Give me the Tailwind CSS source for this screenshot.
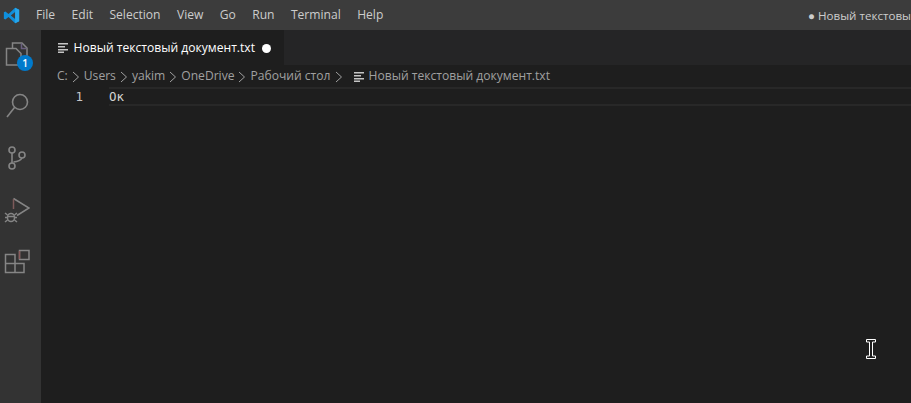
<!DOCTYPE html>
<html lang="en">
<head>
  <meta charset="UTF-8" />
  <title>Новый текстовый документ.txt</title>
  <script src="https://cdn.jsdelivr.net/npm/@tailwindcss/browser@4"></script>
</head>
<body class="w-[911px] h-[403px] overflow-hidden bg-[#1e1e1e] font-['Open_Sans',sans-serif] text-[12.1px] flex flex-col relative">

  <!-- title bar -->
  <div class="h-[30px] shrink-0 bg-[#3c3c3c] flex items-center text-[#cccccc] relative">
    <div class="w-[36px] flex pl-[3px]">
      <svg width="17" height="17" viewBox="0 0 20 20">
        <path d="M14.300 1 19 3.200v13.600L14.300 19 6.500 11.900 2.800 14.800 1 13.900V6.100l1.800-.9 3.700 2.900zM14.300 6 9.200 10l5.100 4z" fill="#0f8fdc" fill-rule="evenodd"/>
        <path d="M14.300 1 19 3.200v13.600L14.300 19z" fill="#28a6ea"/>
      </svg>
    </div>
    <nav class="flex gap-[16.400px]">
      <span>File</span>
      <span>Edit</span>
      <span>Selection</span>
      <span>View</span>
      <span>Go</span>
      <span>Run</span>
      <span>Terminal</span>
      <span>Help</span>
    </nav>
    <span class="absolute left-[808px] top-[7px] whitespace-nowrap text-[11.600px]">● Новый текстовы</span>
  </div>

  <div class="flex flex-1 min-h-0">
    <!-- activity bar -->
    <aside class="w-[41px] shrink-0 bg-[#333333] flex flex-col items-center pr-[7px] text-[#858585]">
      <div class="h-[50px] w-full relative flex items-center justify-center">
        <svg width="26" height="26" viewBox="0 0 26 26" fill="none" stroke="currentColor" stroke-width="1.500">
          <path d="M8.500 6V1h9.500l5 5v13.500h-6"/><path d="M17.500 1.500v5h5" stroke="#6a5f80"/><path d="M2.500 6.500H12l5 5V23H2.500z"/>
        </svg>
        <span class="absolute left-[17px] top-[25px] w-[16px] h-[16px] rounded-full bg-[#007acc] text-white text-[10px] font-semibold leading-[16px] text-center">1</span>
      </div>
      <div class="h-[52px] flex items-center justify-center">
        <svg width="26" height="26" viewBox="0 0 26 26" fill="none" stroke="currentColor" stroke-width="1.600">
          <circle cx="16" cy="9" r="7.500"/><path d="M10.500 14.500 3 24"/>
        </svg>
      </div>
      <div class="h-[52px] flex items-center justify-center">
        <svg width="26" height="26" viewBox="0 0 26 26" fill="none" stroke="currentColor" stroke-width="1.600">
          <circle cx="8" cy="5" r="3"/><circle cx="8" cy="21" r="3"/><circle cx="18" cy="10" r="3"/>
          <path d="M8 8v10M9.500 17c5-.5 7.500-2 8.500-4"/>
        </svg>
      </div>
      <div class="h-[52px] flex items-center justify-center">
        <svg width="26" height="26" viewBox="0 0 26 26" fill="none" stroke="currentColor" stroke-width="1.500">
          <path d="M9.500 1.500 25 11 13 18.500"/><path d="M9.500 2v10" stroke="#7d5a5a"/>
          <rect x="3.500" y="16.500" width="7" height="8" rx="3.500"/><path d="M1 16l2.500 2M13 16l-2.500 2M1 20.500h2.500M10.500 20.500H13M1 25l2.500-2M13 25l-2.500-2M3.500 19.500h7"/>
        </svg>
      </div>
      <div class="h-[52px] flex items-center justify-center">
        <svg width="26" height="26" viewBox="0 0 26 26" fill="none" stroke="currentColor" stroke-width="1.500">
          <path d="M1.500 5.500H11v18H1.500zM1.500 14.500H20v9H11"/><path d="M15.500 1.500H25v9h-9.500z"/><path d="M15.500 2v8" stroke="#8a5a5a"/>
        </svg>
      </div>
    </aside>

    <!-- editor -->
    <main class="flex-1 min-w-0 flex flex-col">
      <div class="h-[35px] shrink-0 bg-[#252526] flex">
        <div class="w-[243px] bg-[#1e1e1e] flex items-center pl-[16.500px] pt-[1px] text-white">
          <svg width="11" height="10" viewBox="0 0 11 10" class="mr-[5px] mt-[-1px]" fill="#c5c5c5">
            <path d="M0 0h10v1.500H0zM0 3h7v1.500H0zM0 6h10v1.500H0zM0 8.500h6V10H0z"/>
          </svg>
          <span class="whitespace-nowrap">Новый текстовый документ.txt</span>
          <span class="ml-[7px] w-[9px] h-[9px] rounded-full bg-white"></span>
        </div>
      </div>
      <div class="h-[22px] shrink-0 flex items-center pl-[16px] pt-[1px] text-[#a0a0a0] whitespace-nowrap">
        <span>C:</span>
        <svg width="12" height="12" viewBox="0 0 12 12" class="mx-[2px]" fill="none" stroke="currentColor"><path d="M3 1l5.500 5L3 11"/></svg>
        <span>Users</span>
        <svg width="12" height="12" viewBox="0 0 12 12" class="mx-[2px]" fill="none" stroke="currentColor"><path d="M3 1l5.500 5L3 11"/></svg>
        <span>yakim</span>
        <svg width="12" height="12" viewBox="0 0 12 12" class="mx-[2px]" fill="none" stroke="currentColor"><path d="M3 1l5.500 5L3 11"/></svg>
        <span>OneDrive</span>
        <svg width="12" height="12" viewBox="0 0 12 12" class="mx-[2px]" fill="none" stroke="currentColor"><path d="M3 1l5.500 5L3 11"/></svg>
        <span>Рабочий стол</span>
        <svg width="12" height="12" viewBox="0 0 12 12" class="mx-[2px]" fill="none" stroke="currentColor"><path d="M3 1l5.500 5L3 11"/></svg>
        <svg width="11" height="10" viewBox="0 0 11 10" class="ml-[7px] mr-[4px]" fill="#c5c5c5">
          <path d="M0 0h10v1.500H0zM0 3h7v1.500H0zM0 6h10v1.500H0zM0 8.500h6V10H0z"/>
        </svg>
        <span>Новый текстовый документ.txt</span>
      </div>
      <div class="h-[19px] flex font-['DejaVu_Sans_Mono',monospace] text-[12.500px] leading-[15px]">
        <span class="w-[42px] shrink-0 pt-[2px] text-right text-[#c6c6c6]">1</span>
        <div class="flex-1 ml-[26px] border-y-2 border-[#282828] text-[#d4d4d4]">Ок</div>
      </div>
    </main>
  </div>

  <!-- mouse cursor -->
  <svg class="absolute left-[866px] top-[339px]" width="10" height="20" viewBox="0 0 10 20" fill="#1e1e1e" stroke="#ffffff">
    <path d="M.5.5h9v2.500h-3v14h3v2.500h-9V17h3V3h-3z"/>
  </svg>
</body>
</html>
